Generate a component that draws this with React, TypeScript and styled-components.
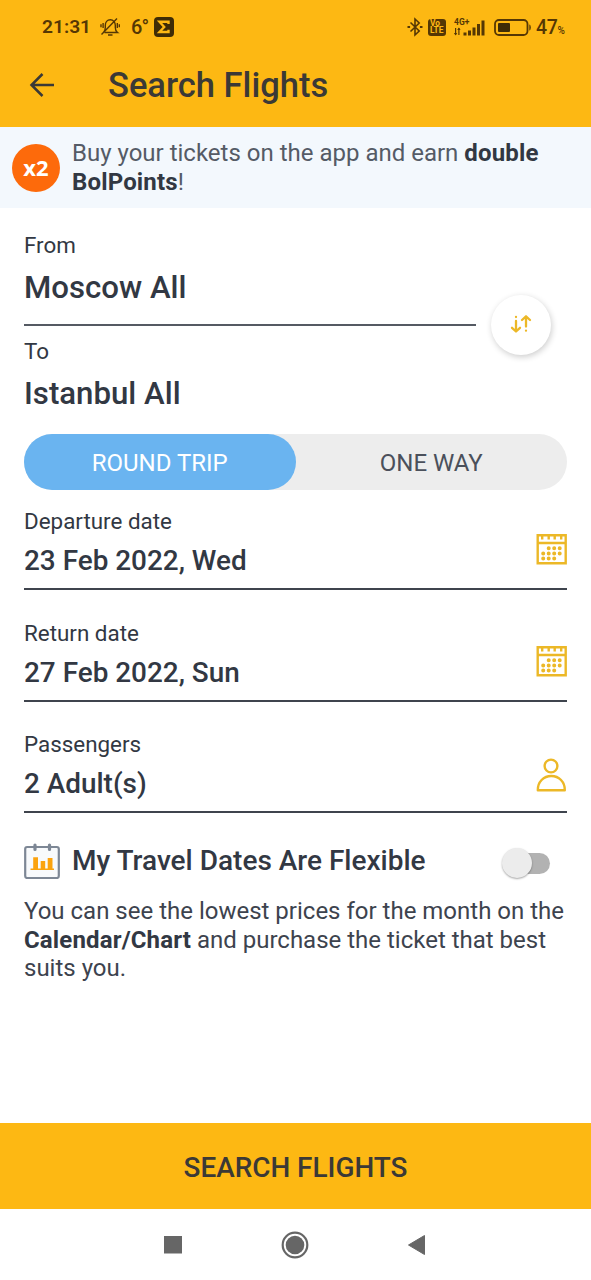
import React from "react";
import styled, { createGlobalStyle } from "styled-components";

const GlobalStyle = createGlobalStyle`
  * { box-sizing: border-box; }
  body { margin: 0; background: #fff; }
`;

const YELLOW = "#fdb813";
const INK = "#323843";
const BROWN = "#553704";
const GOLD = "#ecb827";

const Screen = styled.main`
  width: 591px;
  height: 1280px;
  display: flex;
  flex-direction: column;
  background: #fff;
  color: ${INK};
  font-family: Roboto, "Noto Sans", sans-serif;
  overflow: hidden;
`;

const StatusBar = styled.div`
  height: 44px;
  padding: 10px 26px 0 42px;
  display: flex;
  justify-content: space-between;
  background: ${YELLOW};
  color: ${BROWN};
`;

const StatusGroup = styled.div<{ $gap: number }>`
  height: 34px;
  display: flex;
  align-items: center;
  gap: ${(p) => p.$gap}px;
  svg { display: block; flex: none; }
`;

const Clock = styled.span`
  width: 49px;
  font-size: 19.2px;
  font-weight: 600;
  line-height: 32px;
`;

const Temperature = styled.span`
  width: 14px;
  margin-left: 2px;
  font-size: 20px;
  font-weight: 500;
  letter-spacing: -0.8px;
`;

const VoLte = styled.span`
  width: 18px;
  height: 17px;
  margin-right: 3px;
  padding: 1px 0 0 2px;
  border-radius: 3px;
  background: ${BROWN};
  color: ${YELLOW};
  font-size: 8.4px;
  font-weight: 700;
  line-height: 7.5px;
`;

const Battery = styled.span`
  width: 29px;
  font-size: 19.5px;
  font-weight: 500;
  letter-spacing: -0.3px;
  white-space: nowrap;
  small { font-size: 10px; }
`;

const Header = styled.header`
  height: 83px;
  padding: 0 28px 2px;
  display: flex;
  align-items: center;
  gap: 52px;
  background: ${YELLOW};
  svg { display: block; }
`;

const Title = styled.h1`
  margin: 0;
  font-size: 34.5px;
  font-weight: 500;
  line-height: 36px;
  color: #3b3936;
`;

const Promo = styled.section`
  height: 81px;
  padding: 0 12px;
  display: flex;
  align-items: center;
  gap: 12px;
  background: #f3f8fd;
`;

const PromoBadge = styled.span`
  width: 48px;
  height: 48px;
  flex: none;
  border-radius: 50%;
  background: #fd6a0b;
  color: #fff;
  font: 700 22px/46px "Open Sans", sans-serif;
  text-align: center;
`;

const Paragraph = styled.p<{ $color: string }>`
  margin: 0;
  font-size: 24px;
  line-height: 28.4px;
  color: ${(p) => p.$color};
  b { font-weight: 700; letter-spacing: 0.15px; color: ${INK}; }
`;

const Form = styled.section`
  flex: 1;
  padding: 24px 24px 0;
`;

const Route = styled.div`
  display: flex;
  align-items: center;
  height: 202px;
`;

const RouteFields = styled.div`
  width: 452px;
  height: 202px;
`;

const RouteField = styled.div<{ $line?: boolean }>`
  height: ${(p) => (p.$line ? 94 : 108)}px;
  padding-top: ${(p) => (p.$line ? 0 : 12)}px;
  border-bottom: ${(p) => (p.$line ? "2px solid #555a63" : "0")};
`;

const Label = styled.div`
  font-size: 22.4px;
  line-height: 26px;
`;

const Place = styled.div`
  margin-top: 12px;
  font-size: 31.2px;
  font-weight: 500;
  line-height: 36px;
`;

const SwapButton = styled.button`
  width: 60px;
  height: 60px;
  margin: -16px 0 0 15px;
  padding: 0 0 3px;
  display: grid;
  place-items: center;
  border: 0;
  border-radius: 50%;
  background: #fff;
  box-shadow: 1px 2px 6px rgba(0, 0, 0, 0.2);
`;

const Segments = styled.div`
  height: 56px;
  display: flex;
  border-radius: 28px;
  background: #ededed;
`;

const Segment = styled.button<{ $active?: boolean }>`
  flex: 1;
  padding: 2px 0 0;
  border: 0;
  border-radius: 28px;
  background: ${(p) => (p.$active ? "#6ab4f0" : "transparent")};
  color: ${(p) => (p.$active ? "#fff" : "#4b505b")};
  font: 400 24px/28px Roboto, sans-serif;
`;

const Field = styled.div<{ $first?: boolean }>`
  height: ${(p) => (p.$first ? 100 : 111.6)}px;
  padding-top: ${(p) => (p.$first ? 18 : 29.6)}px;
  display: flex;
  justify-content: space-between;
  border-bottom: 2px solid #3f444d;
  svg { display: block; margin-top: 25px; }
`;

const Value = styled.div`
  margin-top: 10px;
  font-size: 27.9px;
  font-weight: 500;
  line-height: 33px;
`;

const FlexibleRow = styled.div`
  height: 36px;
  margin-top: 30px;
  display: flex;
  align-items: center;
  gap: 12px;
  svg { display: block; flex: none; }
`;

const FlexibleTitle = styled.h2`
  margin: 0;
  flex: 1;
  font-size: 28px;
  font-weight: 500;
  line-height: 32px;
  white-space: nowrap;
`;

const Switch = styled.span`
  width: 48px;
  height: 21px;
  margin: 4px 17px 0 0;
  display: flex;
  align-items: center;
  border-radius: 10.5px;
  background: linear-gradient(90deg, transparent 40%, #b2b2b2 40%);
`;

const Knob = styled.span`
  width: 30px;
  height: 30px;
  border-radius: 50%;
  background: #ececec;
  box-shadow: 0 1px 2px rgba(0, 0, 0, 0.35);
`;

const Note = styled.div`
  margin-top: 18px;
`;

const SearchButton = styled.button`
  height: 86px;
  padding: 3px 0 0;
  border: 0;
  background: ${YELLOW};
  color: #3b3936;
  font: 500 27.9px/32px Roboto, sans-serif;
`;

const NavBar = styled.nav`
  height: 71px;
  padding: 0 163px 0 162px;
  display: flex;
  align-items: center;
  justify-content: space-between;
  svg { display: block; }
`;

const MutedBell = () => (
  <svg width="20" height="20" viewBox="0 0 20 20" fill="none" stroke={BROWN} strokeWidth="1.400">
    <path d="M4.500 15.500h13c-1.700-1.200-2.200-2.400-2.200-5V8.300c0-3-1.900-5.500-5-5.500S5.300 5.300 5.300 8.300v2.200c0 2.600-.4 3.800-1.900 5M8 18h4.500M17 1.500 1.500 17.500M3.100 6v5M1 7.200v3M17.300 6v5M19.300 7.200v3" />
  </svg>
);

const SigmaBadge = () => (
  <svg width="20" height="20" viewBox="0 0 20 20">
    <rect width="20" height="20" rx="4" fill="#3f2c06" />
    <path d="M14.500 7V4.800H5.500L10.200 10l-4.700 5h9V12.800" fill="none" stroke={YELLOW} strokeWidth="2.400" />
  </svg>
);

const Bluetooth = () => (
  <svg width="16" height="20" viewBox="0 0 16 20" fill="none" stroke={BROWN} strokeWidth="1.600">
    <path d="m3.500 5.500 8.700 8.500L8 18V2l4.200 4L3.500 14.500" />
    <path d="M.5 10h2.600M12.900 10h2.600" strokeWidth="2.200" />
  </svg>
);

const Signal = () => (
  <svg width="35" height="20" viewBox="0 0 35 20" fill={BROWN}>
    <text x="0" y="7.500" fontFamily="Roboto" fontWeight="700" fontSize="8.500">4G+</text>
    <path d="M1 11h1.200v7H1zM4.300 11h1.200v7H4.300z" />
    <path d="m-.2 16 1.800 2.500L3.200 16zM3.200 13l1.700-2.500L6.600 13z" />
    <path d="M9.500 15.500h3v3h-3zM14 13.500h3v5h-3zM18.500 10.500h3v8h-3zM23 7h3v11.500h-3zM27.500 3.500h3v15h-3z" />
  </svg>
);

const BatteryIcon = () => (
  <svg width="37" height="17" viewBox="0 0 37 17">
    <rect x="1" y="1" width="32.500" height="15" rx="4" fill="none" stroke={BROWN} strokeWidth="1.800" />
    <rect x="4" y="4" width="12" height="9" rx="1" fill="#3f2c06" />
    <path d="M35.300 5.500c2 0 2 6 0 6z" fill={BROWN} />
  </svg>
);

const BackArrow = () => (
  <svg width="28" height="28" viewBox="0 0 28 28" fill="none" stroke="#3b3936" strokeWidth="2.500">
    <path d="M26 14H4M14.500 3 3.500 14l11 11" />
  </svg>
);

const SwapIcon = () => (
  <svg width="22" height="20" viewBox="0 0 22 20" fill="none" stroke={GOLD} strokeWidth="2.300" strokeLinecap="round" strokeLinejoin="round">
    <path d="M6 7v10M2 13.800l4 3.700 4-3.700M16 12.500V2.500M12 6l4-3.700L20 6M6 3h.01M16 16.700h.01" />
  </svg>
);

const CalendarIcon = () => (
  <svg width="31" height="32" viewBox="0 0 31 32" fill="none" stroke={GOLD} strokeWidth="2.400">
    <path d="M1.700 2.200h28v28h-28zM1.700 10h28M6.200 2v4.500M12.700 2v4.500M18.700 2v4.500M25.200 2v4.500" />
    <path
      d="M12.700 15.200h.01M18.200 15.200h.01M23.700 15.200h.01M7.200 20.400h.01M12.700 20.400h.01M18.200 20.400h.01M23.700 20.400h.01M7.200 25.400h.01M12.700 25.400h.01M18.200 25.400h.01"
      strokeWidth="4"
      strokeLinecap="round"
    />
  </svg>
);

const PersonIcon = () => (
  <svg width="31" height="36" viewBox="0 -2 31 36" fill="none" stroke={GOLD} strokeWidth="2.400" strokeLinejoin="round">
    <circle cx="15" cy="8" r="6.400" />
    <path d="M1.800 32.200h27C29 24 23 18 15.300 18S1.600 24 1.800 32.200z" />
  </svg>
);

const ChartCalendar = () => (
  <svg width="36" height="36" viewBox="0 0 36 36" fill="none">
    <rect x="1.200" y="4" width="33.600" height="31" rx="2" fill="#f8fafc" stroke="#7d8795" strokeWidth="2.200" />
    <path d="M11 2v4.500M25.500 2v4.500" stroke="#7d8795" strokeWidth="3.200" strokeLinecap="round" />
    <path d="M9.200 14.200H14V27H9.200zM16.700 18h4.500v9h-4.500zM23.700 15h4.800v12h-4.800zM6.500 25.400H30V27H6.500z" fill="#fba30f" />
  </svg>
);

function DetailField({ label, value, first, children }: {
  label: string;
  value: string;
  first?: boolean;
  children: React.ReactNode;
}) {
  return (
    <Field $first={first}>
      <div>
        <Label>{label}</Label>
        <Value>{value}</Value>
      </div>
      {children}
    </Field>
  );
}

export default function App() {
  return (
    <Screen>
      <GlobalStyle />
      <StatusBar>
        <StatusGroup $gap={9}>
          <Clock>21:31</Clock>
          <MutedBell />
          <Temperature>6°</Temperature>
          <SigmaBadge />
        </StatusGroup>
        <StatusGroup $gap={5}>
          <Bluetooth />
          <VoLte>Vo<br />LTE</VoLte>
          <Signal />
          <BatteryIcon />
          <Battery>47<small>%</small></Battery>
        </StatusGroup>
      </StatusBar>
      <Header>
        <BackArrow />
        <Title>Search Flights</Title>
      </Header>
      <Promo>
        <PromoBadge>x2</PromoBadge>
        <Paragraph $color="#555b66">
          Buy your tickets on the app and earn <b>double<br />BolPoints</b>!
        </Paragraph>
      </Promo>
      <Form>
        <Route>
          <RouteFields>
            <RouteField $line>
              <Label>From</Label>
              <Place>Moscow All</Place>
            </RouteField>
            <RouteField>
              <Label>To</Label>
              <Place>Istanbul All</Place>
            </RouteField>
          </RouteFields>
          <SwapButton><SwapIcon /></SwapButton>
        </Route>
        <Segments>
          <Segment $active>ROUND TRIP</Segment>
          <Segment>ONE WAY</Segment>
        </Segments>
        <DetailField first label="Departure date" value="23 Feb 2022, Wed">
          <CalendarIcon />
        </DetailField>
        <DetailField label="Return date" value="27 Feb 2022, Sun">
          <CalendarIcon />
        </DetailField>
        <DetailField label="Passengers" value="2 Adult(s)">
          <PersonIcon />
        </DetailField>
        <FlexibleRow>
          <ChartCalendar />
          <FlexibleTitle>My Travel Dates Are Flexible</FlexibleTitle>
          <Switch><Knob /></Switch>
        </FlexibleRow>
        <Note>
          <Paragraph $color="#3d434e">
            You can see the lowest prices for the month on the<br />
            <b>Calendar/Chart</b> and purchase the ticket that best<br />
            suits you.
          </Paragraph>
        </Note>
      </Form>
      <SearchButton>SEARCH FLIGHTS</SearchButton>
      <NavBar>
        <svg width="20" height="20" viewBox="0 0 20 20"><path d="M2 1h18v17.500H2z" fill="#666" /></svg>
        <svg width="28" height="28" viewBox="0 0 28 28">
          <circle cx="14" cy="14" r="12.300" fill="none" stroke="#666" strokeWidth="2.200" />
          <circle cx="14" cy="14" r="9.300" fill="#666" />
        </svg>
        <svg width="20" height="22" viewBox="0 0 20 22"><path d="M16.500 1.500v19L.5 11z" fill="#666" stroke="#666" strokeLinejoin="round" /></svg>
      </NavBar>
    </Screen>
  );
}
